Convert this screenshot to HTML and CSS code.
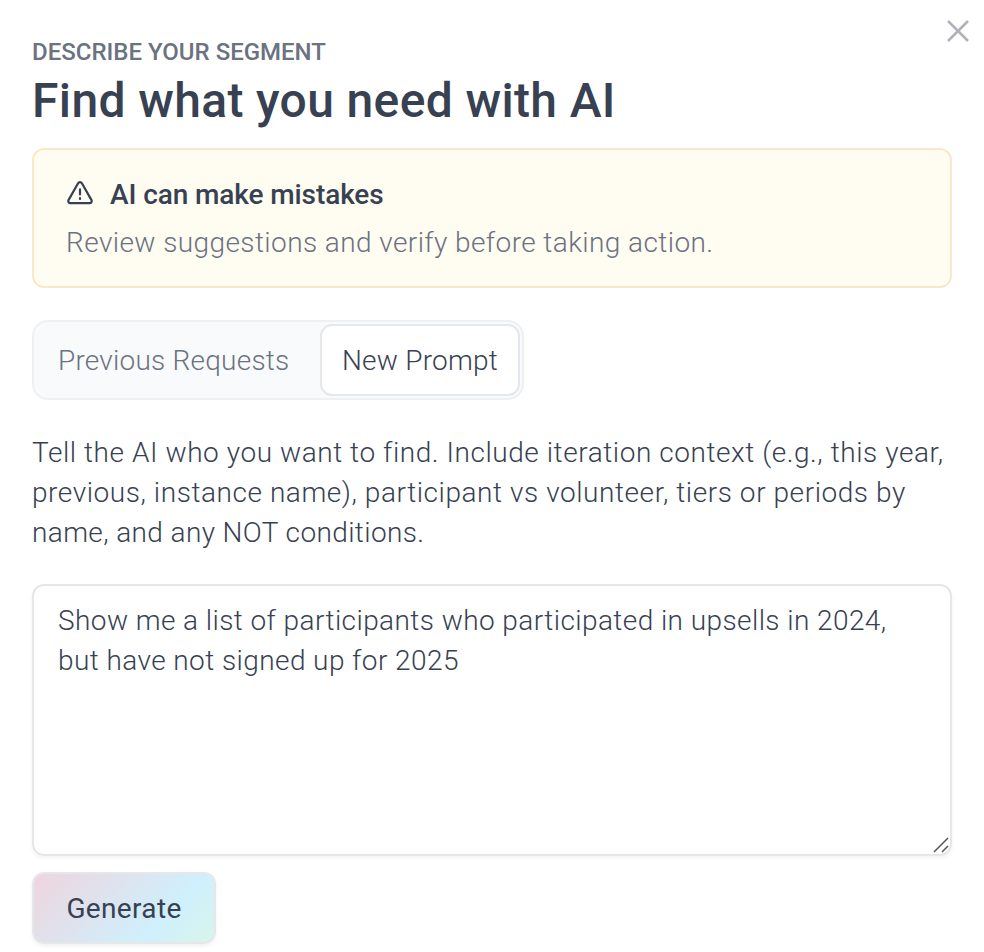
FILE: index.html
```html
<!DOCTYPE html>
<html lang="en">
<head>
<meta charset="utf-8">
<title>Find what you need with AI</title>
<link rel="stylesheet" href="styles.css">
</head>
<body>
<main class="dialog">
  <button class="close" aria-label="Close"><svg viewBox="0 0 22 22" width="22" height="22"><path d="M1 1 21 21M21 1 1 21"/></svg></button>
  <p class="eyebrow">DESCRIBE YOUR SEGMENT</p>
  <h1 class="title">Find what you need with AI</h1>
  <section class="notice">
    <h2 class="notice-title"><svg class="warn" viewBox="0 0 28 26" width="28" height="26"><path d="M12.1 3.2 2.5 20.1a2 2 0 0 0 1.8 3h19.4a2 2 0 0 0 1.8-3L15.9 3.2a2.2 2.2 0 0 0-3.8 0z"/><path d="M14 9.3v5.2M14 18.2v.8"/></svg><span>AI can make mistakes</span></h2>
    <p class="notice-text">Review suggestions and verify before taking action.</p>
  </section>
  <div class="tabs">
    <button class="tab">Previous Requests</button>
    <button class="tab active">New Prompt</button>
  </div>
  <p class="help"><span class="line-wide">Tell the AI who you want to find. Include iteration context (e.g., this year,</span><br><span class="line-wide">previous, instance name), participant vs volunteer, tiers or periods by</span><br>name, and any NOT conditions.</p>
  <div class="field">
    <div class="input">Show me a list of participants who participated in upsells in 2024,<br>but have not signed up for 2025</div>
    <svg class="grip" viewBox="0 0 16 16" width="16" height="16"><path d="M1 15 15 1M9 15 15 9"/></svg>
  </div>
  <button class="generate">Generate</button>
</main>
</body>
</html>
```
FILE: styles.css
```css
* { box-sizing: border-box; }
body { margin: 0; background: #fff; color: #374151; font-family: Roboto, "Liberation Sans", sans-serif; }
button { font: inherit; color: inherit; }
h1, h2, p { margin: 0; }
.dialog { position: relative; width: 984px; height: 952px; padding: 36px 32px 0; overflow: hidden; }
.close { position: absolute; top: 20px; right: 15px; width: 22px; height: 22px; padding: 0; border: 0; background: none; }
.close svg { display: block; fill: none; stroke: #b0b2b9; stroke-width: 2.5; }
.eyebrow { height: 32px; line-height: 32px; font-size: 24px; font-weight: 470; color: #6b7280; letter-spacing: 0; }
.title { height: 64px; line-height: 64px; font-size: 48px; font-weight: 460; margin-top: 1px; letter-spacing: .36px; }
.notice { height: 140px; margin-top: 15px; padding: 24px 32px; border: 2px solid #fae8c8; border-radius: 12px; background: #fffcf2; }
.notice-title { display: flex; align-items: center; height: 40px; font-size: 28px; font-weight: 490; letter-spacing: -.1px; }
.warn { margin: -3px 16px 0 0; fill: none; stroke: #374151; stroke-width: 2.2; stroke-linecap: round; stroke-linejoin: round; }
.notice-text { margin-top: 9px; line-height: 40px; font-size: 28px; font-weight: 330; letter-spacing: .41px; color: #6b7280; }
.tabs { display: flex; width: 492px; height: 80px; margin-top: 32px; padding: 2px; border: 2px solid #eff0f2; border-radius: 16px; background: #f9fafb; }
.tab { width: 284px; padding: 0 0 0 22px; text-align: left; border: 0; background: none; font-size: 28px; font-weight: 330; letter-spacing: .22px; color: #6b7280; }
.tab.active { width: 200px; padding: 0 0 0 20px; border: 2px solid #e5e7eb; border-radius: 12px; background: #fff; color: #374151; }
.help { margin-top: 33px; height: 120px; line-height: 40px; font-size: 28px; font-weight: 330; letter-spacing: .38px; white-space: nowrap; }
.line-wide { letter-spacing: .56px; }
.field { position: relative; height: 272px; margin-top: 31px; padding: 15px 24px; border: 2px solid #e5e7eb; border-radius: 12px; box-shadow: 0 2px 4px rgba(0,0,0,.05); }
.input { line-height: 40px; font-size: 28px; font-weight: 330; letter-spacing: .42px; white-space: nowrap; }
.grip { position: absolute; right: 1px; bottom: 1px; fill: none; stroke: #555; stroke-width: 1.5; }
.generate { display: block; width: 184px; height: 72px; margin-top: 16px; padding: 0; border: 2px solid #e5e7eb; border-radius: 12px; font-size: 28px; font-weight: 400; letter-spacing: .35px; background: linear-gradient(135deg, #eed5dd, #cff0fd 71%, #d8f5ea); box-shadow: 0 2px 4px rgba(0,0,0,.06); }
```
